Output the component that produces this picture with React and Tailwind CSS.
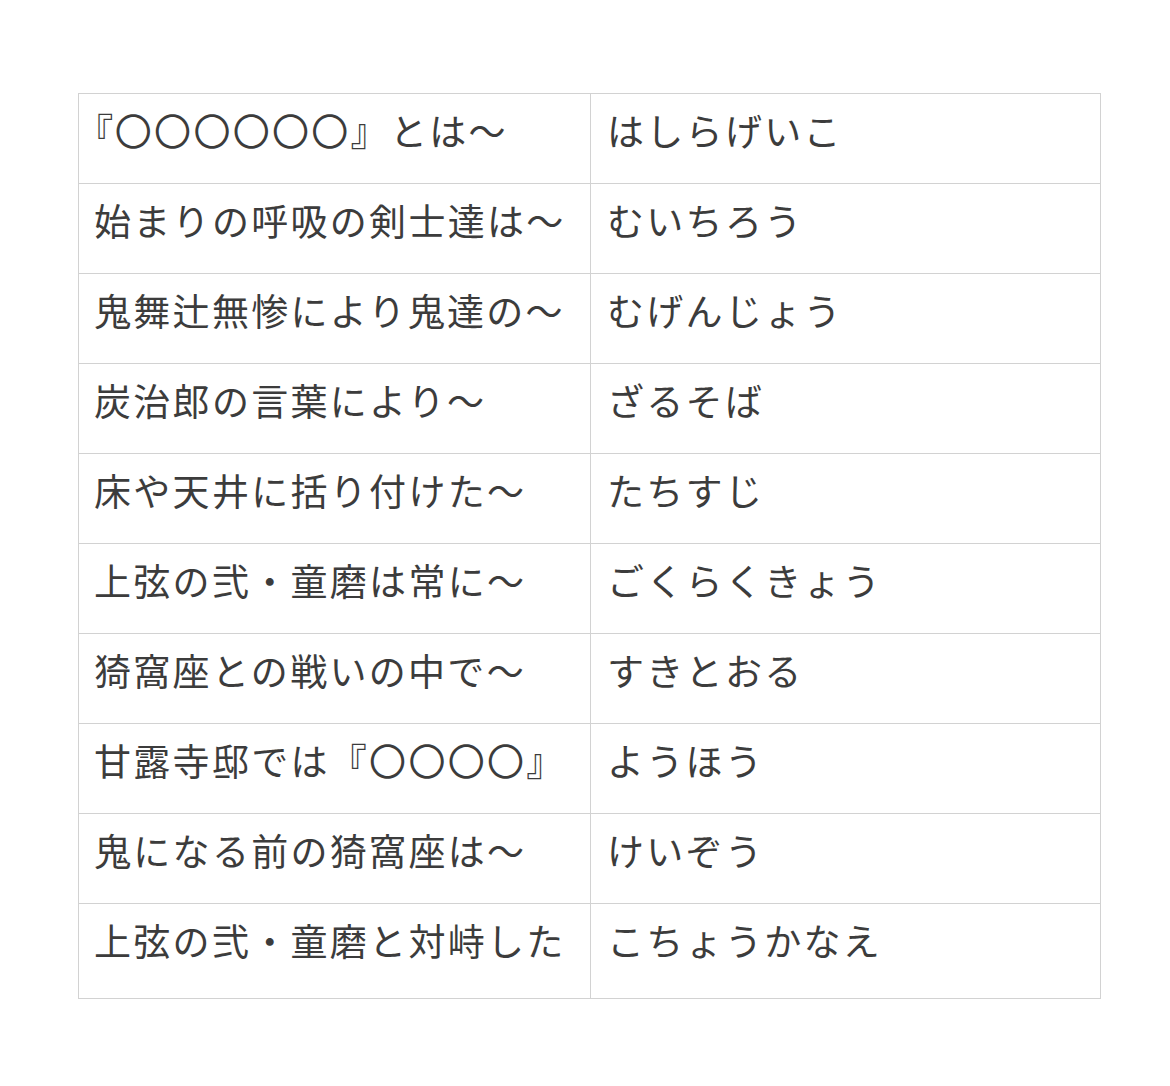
import React from "react";

const rows = [
  ["『〇〇〇〇〇〇』とは〜", "はしらげいこ"],
  ["始まりの呼吸の剣士達は〜", "むいちろう"],
  ["鬼舞辻無惨により鬼達の〜", "むげんじょう"],
  ["炭治郎の言葉により〜", "ざるそば"],
  ["床や天井に括り付けた〜", "たちすじ"],
  ["上弦の弐・童磨は常に〜", "ごくらくきょう"],
  ["猗窩座との戦いの中で〜", "すきとおる"],
  ["甘露寺邸では『〇〇〇〇』", "ようほう"],
  ["鬼になる前の猗窩座は〜", "けいぞう"],
  ["上弦の弐・童磨と対峙した", "こちょうかなえ"],
];

function renderText(t) {
  if (t.startsWith("『")) {
    return (
      <>
        <span className="[font-feature-settings:'palt']">『</span>
        {t.slice(1)}
      </>
    );
  }
  return t;
}

export default function App() {
  return (
    <div className="w-[1170px] h-[1086px] bg-white pt-[93px] pl-[78px]" style={{ fontFamily: '"Noto Sans CJK JP", "Noto Sans", sans-serif' }}>
      <div className="w-[1023px] border border-[#d2d2d2]">
        {rows.map(([a, b], i) => (
          <div
            key={i}
            className={`grid grid-cols-[512px_1fr] ${i < rows.length - 1 ? "h-[90px] border-b border-[#d2d2d2]" : "h-[94px]"}`}
          >
            <div className="border-r border-[#d2d2d2] pl-[15px] pt-[16px] text-[37px] leading-[40px] tracking-[2.3px] text-[#3c3c3c] whitespace-nowrap">
              {renderText(a)}
            </div>
            <div className="pl-[16px] pt-[16px] text-[37px] leading-[40px] tracking-[2.3px] text-[#3c3c3c] whitespace-nowrap">
              {b}
            </div>
          </div>
        ))}
      </div>
    </div>
  );
}
